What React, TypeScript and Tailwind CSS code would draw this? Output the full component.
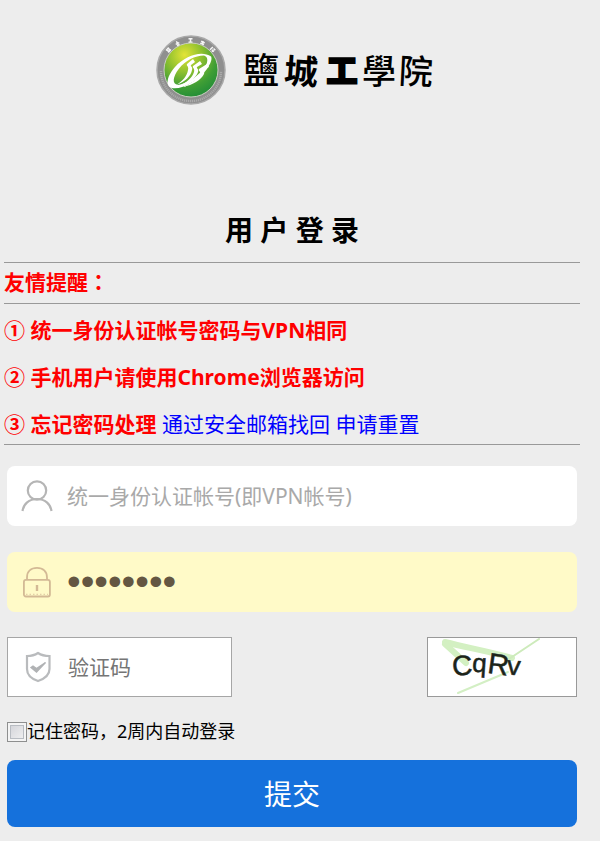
import { useState } from "react";

const notices = [
  { mark: "①", text: "统一身份认证帐号密码与VPN相同" },
  { mark: "②", text: "手机用户请使用Chrome浏览器访问" },
  { mark: "③", text: "忘记密码处理" },
];

function Emblem() {
  return (
    <svg className="h-[70px] w-[70px]" viewBox="0 0 70 70" aria-hidden="true">
      <defs>
        <radialGradient id="ball" cx="0.38" cy="0.22" r="0.85">
          <stop offset="0" stopColor="#e3e437" />
          <stop offset="0.35" stopColor="#94c32f" />
          <stop offset="0.7" stopColor="#3f9e35" />
          <stop offset="1" stopColor="#1d8a38" />
        </radialGradient>
      </defs>
      <circle cx="35" cy="35" r="34" fill="#8f8f8f" stroke="#a9a9a9" strokeWidth="1.5" />
      <path
        d="M 5 36 A 30 30 0 0 0 65 36"
        fill="none"
        stroke="#aaaaaa"
        strokeWidth="2.5"
        strokeDasharray="1.2 0.8"
      />
      <g fill="none" stroke="#f4f4f4" strokeWidth="1.5">
        <path d="M-2 -1.5 H2 M-2 1.5 H2 M-1 -2 V2 M1 -2 V2" transform="translate(12.5 15) rotate(-48)" />
        <path d="M-2 0 H2 M-1.5 2 H1.5 M0 -2.5 V2" transform="translate(21.5 8.5) rotate(-27)" />
        <path d="M-2 -1.8 H2 M-2 1.8 H2 M0 -2 V2" transform="translate(34.5 5.5)" />
        <path d="M-2 -1 H2 M-2 1 H2 M0 -2 V2.5" transform="translate(46.5 8) rotate(24)" />
        <path d="M-1.5 -2 V2 M0 -1.5 H2.5 M0 0.5 H2.5 M1 0 V2" transform="translate(56.5 14.5) rotate(46)" />
      </g>
      <circle cx="35" cy="35" r="27" fill="url(#ball)" stroke="#c9cfc0" strokeWidth="1" />
      <path
        fillRule="evenodd"
        d="M58 22 C49 15 33 19 21 30 C11 40 10 50 19 51 C29 52 45 44 53 34 C57 29 59 25 58 22 Z
           M51 20.5 C42 20 32 24 25 32 C18 40 17 47 23 48 C31 48 45 40 51 32 C55 27 55 22 51 20.5 Z"
        transform="rotate(-4 35 35) translate(-2 1)"
        fill="#fff"
      />
      <g fill="#fff">
        <path d="M37 24 L31 29 C30 31 33 31 32 35 C31 41 27 46 20 50 C29 47 35 41 36 35 C37 32 34 31 35 30 L39 27 Z" />
        <path d="M44 26 L37 31 C36 33 39 33 38 37 C36 43 31 47 23 51 C33 48 40 43 42 37 C43 34 40 33 41 32 L46 29 Z" />
        <path d="M51 29 L43 34 C42 36 45 36 44 39 C41 45 35 48 27 52 C37 50 45 45 48 39 C49 36 46 36 47 35 L53 32 Z" />
      </g>
    </svg>
  );
}

function Wordmark() {
  return (
    <svg
      className="h-[70px] w-[196px] font-['Noto_Sans_CJK_TC','Liberation_Sans',sans-serif]"
      viewBox="0 0 196 70"
      role="img"
      aria-label="鹽城工學院"
    >
      <g fill="#000" stroke="#000" textAnchor="middle" strokeWidth="0">
        <text x="21" y="49" fontSize="36" fontWeight="500">鹽</text>
        <text x="61" y="49" fontSize="34" fontWeight="700" transform="rotate(4 61 36)">城</text>
        <text x="102" y="47" fontSize="31" fontWeight="900" strokeWidth="2">工</text>
        <text x="139" y="49" fontSize="34" fontWeight="500">學</text>
        <text x="176" y="49" fontSize="34" fontWeight="500" transform="rotate(3 176 36)">院</text>
      </g>
    </svg>
  );
}

function UserIcon() {
  return (
    <svg className="h-8 w-8 shrink-0" viewBox="0 0 32 32" fill="none" stroke="#b5b5b5" strokeWidth="2.2" aria-hidden="true">
      <circle cx="16" cy="10.5" r="9.2" />
      <path d="M1.5 31 C2.5 24 8 19 16 19 C24 19 29.5 24 30.5 31" />
    </svg>
  );
}

function LockIcon() {
  return (
    <svg className="h-8 w-8 shrink-0" viewBox="0 0 32 32" fill="none" stroke="#d3b995" strokeWidth="1.8" aria-hidden="true">
      <rect x="2.9" y="13.9" width="26" height="16.6" rx="2" />
      <path d="M6 14 V11.5 C6 5.5 10 1.9 16 1.9 C22 1.9 26 5.5 26 11.5 V14" />
      <path d="M16 19 V25" strokeWidth="2.4" />
      <path d="M5 28.3 H27" strokeWidth="0.8" strokeDasharray="1.5 2" />
    </svg>
  );
}

function ShieldIcon() {
  return (
    <svg className="h-8 w-8 shrink-0" viewBox="0 0 32 32" fill="none" stroke="#b9bbbd" strokeWidth="2.2" aria-hidden="true">
      <path d="M16 2 C13 4 9 5 5 5 V18 C5 24 10 28 16 30 C22 28 27.5 24 27.5 18 V5 C23 5 19 4 16 2 Z" />
      <path d="M9 16.5 L14.5 21 L23.5 11.5 L14.5 17.5 L11 15 Z" fill="#b0b2b4" stroke="#b0b2b4" strokeWidth="1.4" />
    </svg>
  );
}

function Captcha() {
  return (
    <svg
      className="block h-full w-full font-['Liberation_Sans',sans-serif]"
      viewBox="0 0 148 58"
      role="img"
      aria-label="CqRv"
    >
      <g fill="none" strokeLinecap="round">
        <path d="M17 4 C40 10 60 13 84 20" stroke="#d3f0c2" strokeWidth="6" />
        <path d="M17 6 L38 25" stroke="#d3f0c2" strokeWidth="6" />
        <path d="M111 1 L78 23" stroke="#cdebbb" strokeWidth="2" />
        <path d="M30 55 L80 34" stroke="#d3efc4" strokeWidth="2" />
      </g>
      <g fill="#1c241a" stroke="#1c241a" strokeWidth="0.5">
        <text x="24" y="37" fontSize="28" transform="rotate(-4 34 27)">C</text>
        <text x="44" y="34" fontSize="26" transform="rotate(4 50 30)">q</text>
        <text x="60" y="36" fontSize="29" transform="rotate(8 68 27)">R</text>
        <text x="79" y="37" fontSize="27" transform="rotate(4 85 30)">v</text>
      </g>
    </svg>
  );
}

export default function App() {
  const [account, setAccount] = useState("");
  const [password, setPassword] = useState("password");
  const [code, setCode] = useState("");
  const [remember, setRemember] = useState(false);

  return (
    <div className="min-h-screen bg-[#ededed] pt-[35px] pr-5 pb-4 pl-1 font-['Noto_Sans','Noto_Sans_CJK_SC',sans-serif] text-[21px] text-black">
      <header className="flex items-center justify-center gap-[14px] pl-2">
        <Emblem />
        <Wordmark />
      </header>

      <h1 className="mt-[105px] text-center text-[28px] leading-10 font-bold">用 户 登 录</h1>

      <section className="mt-3 border-y border-[#999] font-bold text-[#f00]">
        <h2 className="pt-[3px] pb-[5px] leading-[31px]">
          友情提醒<span className="font-['Noto_Sans_CJK_TC',sans-serif]">：</span>
        </h2>
        <ul className="flex flex-col gap-[15px] border-t border-[#999] pt-[10px] pb-1 leading-8">
          {notices.map((notice, index) => (
            <li key={notice.mark}>
              {notice.mark} {notice.text}
              {index === 2 && (
                <span className="font-normal text-[#00f]">
                  {" "}
                  <a href="#mail">通过安全邮箱找回</a> <a href="#reset">申请重置</a>
                </span>
              )}
            </li>
          ))}
        </ul>
      </section>

      <form className="mt-[21px] px-[3px]" onSubmit={(e) => e.preventDefault()}>
        <label className="flex h-[60px] items-center gap-[14px] rounded-lg bg-white px-[14px]">
          <UserIcon />
          <input
            type="text"
            aria-label="统一身份认证帐号"
            className="h-full min-w-0 flex-1 bg-transparent outline-none placeholder:text-[#a9a9a9]"
            placeholder="统一身份认证帐号(即VPN帐号)"
            value={account}
            onChange={(e) => setAccount(e.target.value)}
          />
        </label>

        <label className="mt-[26px] flex h-[60px] items-center gap-[14px] rounded-lg bg-[#fffac8] px-[14px]">
          <LockIcon />
          <input
            type="password"
            aria-label="密码"
            className="h-full min-w-0 flex-1 bg-transparent font-['Liberation_Sans',sans-serif] text-[39px] text-[#645642] outline-none"
            value={password}
            onChange={(e) => setPassword(e.target.value)}
          />
        </label>

        <div className="mt-[25px] flex justify-between">
          <label className="flex h-[60px] w-[225px] items-center gap-[14px] border border-[#a6a6a6] bg-white px-[14px]">
            <ShieldIcon />
            <input
              type="text"
              aria-label="验证码"
              className="h-full min-w-0 flex-1 bg-transparent outline-none placeholder:text-[#757575]"
              placeholder="验证码"
              value={code}
              onChange={(e) => setCode(e.target.value)}
            />
          </label>
          <button type="button" aria-label="CqRv" className="h-[60px] w-[150px] border border-[#999] bg-white">
            <Captcha />
          </button>
        </div>

        <label className="mt-5 flex items-center text-lg leading-7">
          <input
            type="checkbox"
            className="mt-[2px] h-5 w-5 appearance-none border border-[#8e8f8f] bg-linear-to-br from-[#cfd0d6] to-[#f4f4f4] shadow-[inset_0_0_0_2px_#f4f4f4,inset_0_0_0_3px_#b8bcc2] checked:from-[#1571dc] checked:to-[#1571dc]"
            checked={remember}
            onChange={(e) => setRemember(e.target.checked)}
          />
          记住密码，2周内自动登录
        </label>

        <button type="submit" className="mt-[15px] h-[67px] w-full rounded-lg bg-[#1571dc] text-[28px] text-white">
          提交
        </button>
      </form>
    </div>
  );
}
